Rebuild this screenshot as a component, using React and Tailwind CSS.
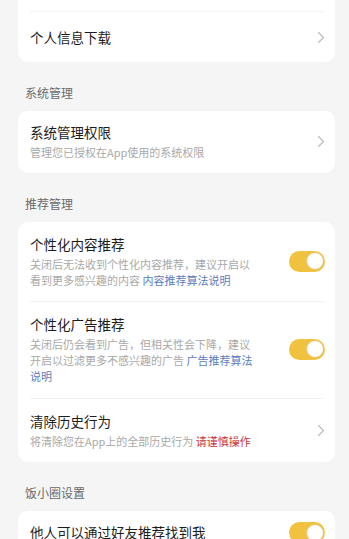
import React from 'react'

const font = { fontFamily: '"Noto Sans CJK SC", "Noto Sans", sans-serif' }

function Chevron() {
  return (
    <svg className="w-[8px] h-[13px] shrink-0" viewBox="0 0 8 13" fill="none" stroke="#b8b8b8" strokeWidth="1.1" strokeLinecap="round" strokeLinejoin="round">
      <polyline points="1.5 1.5 6.5 6.5 1.5 11.5" />
    </svg>
  )
}

function Toggle() {
  return (
    <div className="w-[36px] h-[21px] rounded-full bg-[#f1c140] flex items-center justify-end pr-[1.5px] shrink-0">
      <div className="w-[18px] h-[18px] rounded-full bg-white border border-[#e9c468]" />
    </div>
  )
}

function Label({ children }) {
  return <div className="pt-[22px] pb-[9px] pl-[25px] text-[12px] leading-[18px] text-[#6a6a6a]">{children}</div>
}

function Card({ children }) {
  return <div className="ml-[18px] mr-[14px] bg-white rounded-[10px] px-[12px]">{children}</div>
}

function Row({ title, desc, right, divider, pt = 'pt-[12px]', pb = 'pb-[13px]' }) {
  return (
    <div className={`flex items-center justify-between ${pt} ${pb} ${divider ? 'border-b border-[#f0f0f0]' : ''}`}>
      <div className="flex flex-col">
        <div className="text-[13.5px] leading-[21px] text-[#1c1c1c]">{title}</div>
        {desc && <div className="mt-[1px] text-[11px] leading-[16px] text-[#a9a9a9]">{desc}</div>}
      </div>
      <div className="mr-[-2px]">{right}</div>
    </div>
  )
}

export default function App() {
  return (
    <div className="bg-[#f5f5f5] min-h-screen overflow-hidden" style={font}>
      <div className="-mt-[38px]">
        <Card>
          <div className="h-[50px] border-b border-[#f3f3f3]" />
          <Row title="个人信息下载" right={<Chevron />} pt="pt-[15px]" pb="pb-[14px]" />
        </Card>

        <Label>系统管理</Label>
        <Card>
          <Row
            title="系统管理权限"
            desc="管理您已授权在App使用的系统权限"
            right={<Chevron />}
            pt="pt-[11px]"
            pb="pb-[13px]"
          />
        </Card>

        <Label>推荐管理</Label>
        <Card>
          <Row
            title="个性化内容推荐"
            desc={
              <>
                关闭后无法收到个性化内容推荐，建议开启以
                <br />
                看到更多感兴趣的内容 <span className="text-[#5d7cbd]">内容推荐算法说明</span>
              </>
            }
            right={<Toggle />}
            divider
          />
          <Row
            title="个性化广告推荐"
            desc={
              <>
                关闭后仍会看到广告，但相关性会下降，建议
                <br />
                开启以过滤更多不感兴趣的广告 <span className="text-[#5d7cbd]">广告推荐算法</span>
                <br />
                <span className="text-[#5d7cbd]">说明</span>
              </>
            }
            right={<Toggle />}
            divider
            pb="pb-[14px]"
          />
          <Row
            title="清除历史行为"
            desc={
              <>
                将清除您在App上的全部历史行为 <span className="text-[#c9343c]">请谨慎操作</span>
              </>
            }
            right={<Chevron />}
          />
        </Card>

        <Label>饭小圈设置</Label>
        <Card>
          <Row title="他人可以通过好友推荐找到我" right={<Toggle />} pt="pt-[11px]" pb="pb-[11px]" />
        </Card>
        <div className="h-[40px]" />
      </div>
    </div>
  )
}
